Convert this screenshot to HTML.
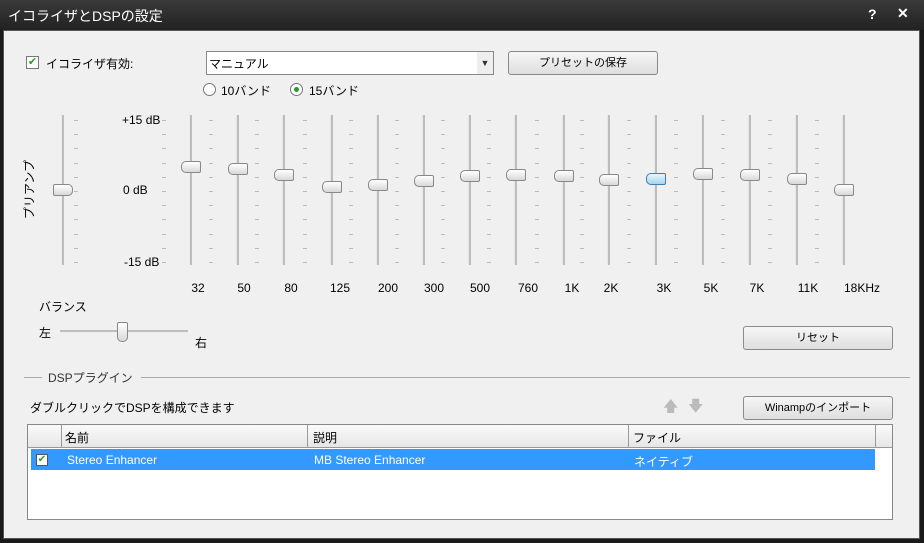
<!DOCTYPE html><html><head><meta charset="utf-8"><style>
body{margin:0;width:924px;height:543px;overflow:hidden;background:#1a1a1a;font-family:"Liberation Sans","Noto Sans CJK JP",sans-serif;font-size:12px;color:#000;position:relative}
.a{position:absolute}
.title{left:0;top:0;width:924px;height:30px;background:linear-gradient(#3a3a3a,#222);color:#fff;font-size:14px}
.body{left:3px;top:30px;width:915px;height:507px;background:#f0f0f0;border:1px solid #555}
.btn{position:absolute;height:22px;border:1px solid #8a8a8a;border-radius:3px;background:linear-gradient(#f6f6f6,#dedede);text-align:center;line-height:22px;font-size:11px}
.track{position:absolute;width:2px;background:#bdbdbd;border-left:1px solid #e8e8e8}
.thumb{position:absolute;width:18px;height:10px;border:1px solid #888;border-radius:2px 4px 4px 2px;background:linear-gradient(#fff,#d8d8d8)}
.tick{position:absolute;width:4px;height:1px;background:#bbb}
.lbl{position:absolute;width:40px;text-align:center}
</style></head><body>
<div class="a title"><span class="a" style="left:8px;top:6px">イコライザとDSPの設定</span><span class="a" style="left:868px;top:6px;font-weight:bold">?</span><span class="a" style="left:897px;top:5px;font-weight:bold">✕</span></div>
<div class="a body"></div>
<div class="a" style="left:26px;top:56px;width:11px;height:11px;border:1px solid #777;background:#fff;color:#2a9a2a;font-size:11px;line-height:11px;text-align:center">✔</div>
<div class="a" style="left:46px;top:55px">イコライザ有効:</div>
<div class="a" style="left:206px;top:51px;width:286px;height:22px;border:1px solid #888;background:#fff"><span class="a" style="left:2px;top:3px">マニュアル</span><span class="a" style="right:0;top:0;width:16px;height:22px;background:#eee;font-size:9px;line-height:22px;text-align:center;color:#333">▼</span></div>
<div class="btn" style="left:508px;top:51px;width:148px">プリセットの保存</div>
<div class="a" style="left:203px;top:83px;width:11px;height:11px;border:1px solid #777;border-radius:50%;background:#fff"></div>
<div class="a" style="left:221px;top:82px">10バンド</div>
<div class="a" style="left:290px;top:83px;width:11px;height:11px;border:1px solid #777;border-radius:50%;background:#fff"><div class="a" style="left:3px;top:3px;width:5px;height:5px;border-radius:50%;background:#2a9a2a"></div></div>
<div class="a" style="left:309px;top:82px">15バンド</div>
<div class="a" style="left:122px;top:113px">+15 dB</div>
<div class="a" style="left:123px;top:183px">0 dB</div>
<div class="a" style="left:124px;top:255px">-15 dB</div>
<div class="a" style="left:-3px;top:181px;width:64px;text-align:center;transform:rotate(-90deg)">プリアンプ</div>
<div id="eq"></div>
<div class="a" style="left:39px;top:298px">バランス</div>
<div class="a" style="left:39px;top:324px">左</div>
<div class="a" style="left:195px;top:334px">右</div>
<div class="a" style="left:60px;top:330px;width:128px;height:2px;background:#bdbdbd"></div>
<div class="thumb" style="left:117px;top:322px;width:9px;height:18px;border-radius:2px 2px 5px 5px"></div>
<div class="btn" style="left:743px;top:326px;width:148px">リセット</div>
<div class="a" style="left:24px;top:377px;width:18px;height:1px;background:#aaa"></div>
<div class="a" style="left:48px;top:369px;color:#333">DSPプラグイン</div>
<div class="a" style="left:141px;top:377px;width:769px;height:1px;background:#aaa"></div>
<div class="a" style="left:30px;top:399px">ダブルクリックでDSPを構成できます</div>
<div class="a" style="left:663px;top:396px;color:#bbb;font-size:15px">🡅</div>
<div class="a" style="left:688px;top:396px;color:#bbb;font-size:15px">🡇</div>
<div class="btn" style="left:743px;top:396px;width:148px">Winampのインポート</div>
<div class="a" style="left:27px;top:424px;width:864px;height:94px;border:1px solid #888;background:#fff">
<div class="a" style="left:0;top:0;width:864px;height:22px;background:linear-gradient(#fafafa,#e6e6e6);border-bottom:1px solid #999"></div>
<div class="a" style="left:33px;top:0;width:1px;height:22px;background:#999"></div>
<div class="a" style="left:279px;top:0;width:1px;height:22px;background:#999"></div>
<div class="a" style="left:600px;top:0;width:1px;height:22px;background:#999"></div>
<div class="a" style="left:847px;top:0;width:1px;height:22px;background:#999"></div>
<div class="a" style="left:37px;top:4px">名前</div><div class="a" style="left:285px;top:4px">説明</div><div class="a" style="left:605px;top:4px">ファイル</div>
<div class="a" style="left:3px;top:24px;width:844px;height:21px;background:#3399ff;color:#fff">
<div class="a" style="left:5px;top:5px;width:10px;height:10px;border:1px solid #555;background:#fff;color:#2a9a2a;font-size:10px;line-height:10px;text-align:center">✔</div>
<span class="a" style="left:36px;top:4px">Stereo Enhancer</span><span class="a" style="left:283px;top:4px">MB Stereo Enhancer</span><span class="a" style="left:603px;top:4px">ネイティブ</span></div>
</div>
<script>
var xs=[62,190,237,283,331,377,423,469,515,563,608,655,702,749,796,843],ys=[189,166,168,174,186,184,180,175,174,175,179,178,173,174,178,189],
lb=["32","50","80","125","200","300","500","760","1K","2K","3K","5K","7K","11K","18KHz"],lx=[198,244,291,340,388,434,480,528,572,611,664,711,757,808,862],h="";
xs.forEach(function(x,i){h+='<div class="track" style="left:'+(x-1)+'px;top:115px;height:150px"></div>';
var tx=(i==0?x+12:x-28);
for(var k=0;k<11;k++)h+='<div class="tick" style="left:'+tx+'px;top:'+Math.round(120+k*14.2)+'px"></div>';
h+='<div class="thumb" style="left:'+(x-9)+'px;top:'+(ys[i]-5)+'px;'+(i==0?'border-radius:2px 5px 5px 2px':'border-radius:5px 2px 2px 5px')+(i==11?';background:linear-gradient(#e8f4fc,#a9d4f0);border-color:#3c7fb1':'')+'"></div>';
if(i)h+='<div class="lbl" style="left:'+(lx[i-1]-20)+'px;top:281px">'+lb[i-1]+'</div>';});
document.getElementById("eq").innerHTML=h;
</script>
</body></html>
